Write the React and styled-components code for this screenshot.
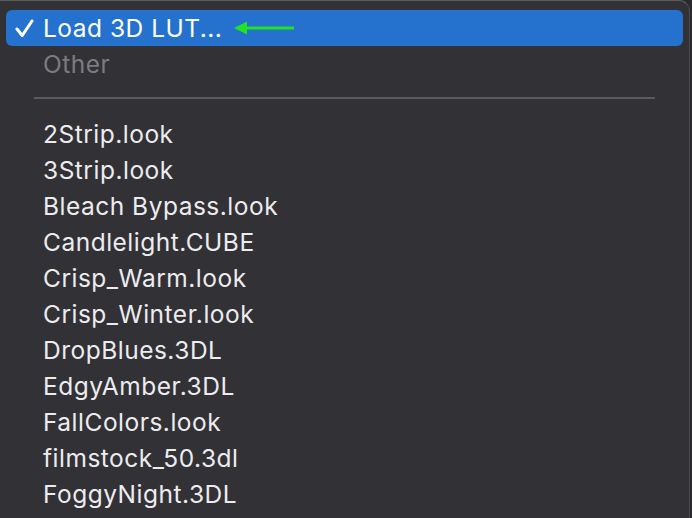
import React from "react";
import styled, { createGlobalStyle } from "styled-components";

const GlobalStyle = createGlobalStyle`
  html, body {
    margin: 0;
    padding: 0;
    background: #2a292d;
    overflow: hidden;
  }
`;

const items = [
  "2Strip.look",
  "3Strip.look",
  "Bleach Bypass.look",
  "Candlelight.CUBE",
  "Crisp_Warm.look",
  "Crisp_Winter.look",
  "DropBlues.3DL",
  "EdgyAmber.3DL",
  "FallColors.look",
  "filmstock_50.3dl",
  "FoggyNight.3DL",
];

const Menu = styled.div`
  width: 690px;
  height: 540px;
  box-sizing: border-box;
  background: #323136;
  border-top: 1px solid #5c5b60;
  border-right: 1px solid #4a494e;
  border-top-right-radius: 11px;
  padding-top: 9px;
  font-family: Inter, "Liberation Sans", Arial, sans-serif;
  font-size: 24.5px;
  letter-spacing: 0.5px;
  color: #ececee;
`;

const Row = styled.div`
  position: relative;
  display: flex;
  align-items: center;
  height: 36px;
  margin: 0 6px;
  padding-left: 37px;
  box-sizing: border-box;
  border-radius: 6px;
  background: ${(p) => (p.$active ? "#2471ce" : "transparent")};
  color: ${(p) => (p.$active ? "#ffffff" : p.$disabled ? "#7c7b80" : "#ececee")};
`;

const Check = styled.svg`
  position: absolute;
  left: 9px;
  top: 9px;
`;

const Arrow = styled.svg`
  margin-left: 12px;
`;

const Separator = styled.div`
  height: 2px;
  margin: 15px 34px 17px 34px;
  background: #5b5a5f;
`;

export default function App() {
  return (
    <>
      <GlobalStyle />
      <Menu>
        <Row $active>
          <Check width="19" height="19" viewBox="0 0 19 19">
            <path
              d="M2 10 L7.2 16.5 L17 2"
              fill="none"
              stroke="#fff"
              strokeWidth="3"
              strokeLinecap="round"
              strokeLinejoin="round"
            />
          </Check>
          Load 3D LUT...
          <Arrow width="62" height="16" viewBox="0 0 62 16">
            <polygon points="0,8 13,1.5 13,14.5" fill="#22e322" />
            <rect x="10" y="6.5" width="50" height="3" fill="#22e322" />
          </Arrow>
        </Row>
        <Row $disabled>Other</Row>
        <Separator />
        {items.map((name) => (
          <Row key={name}>{name}</Row>
        ))}
      </Menu>
    </>
  );
}
